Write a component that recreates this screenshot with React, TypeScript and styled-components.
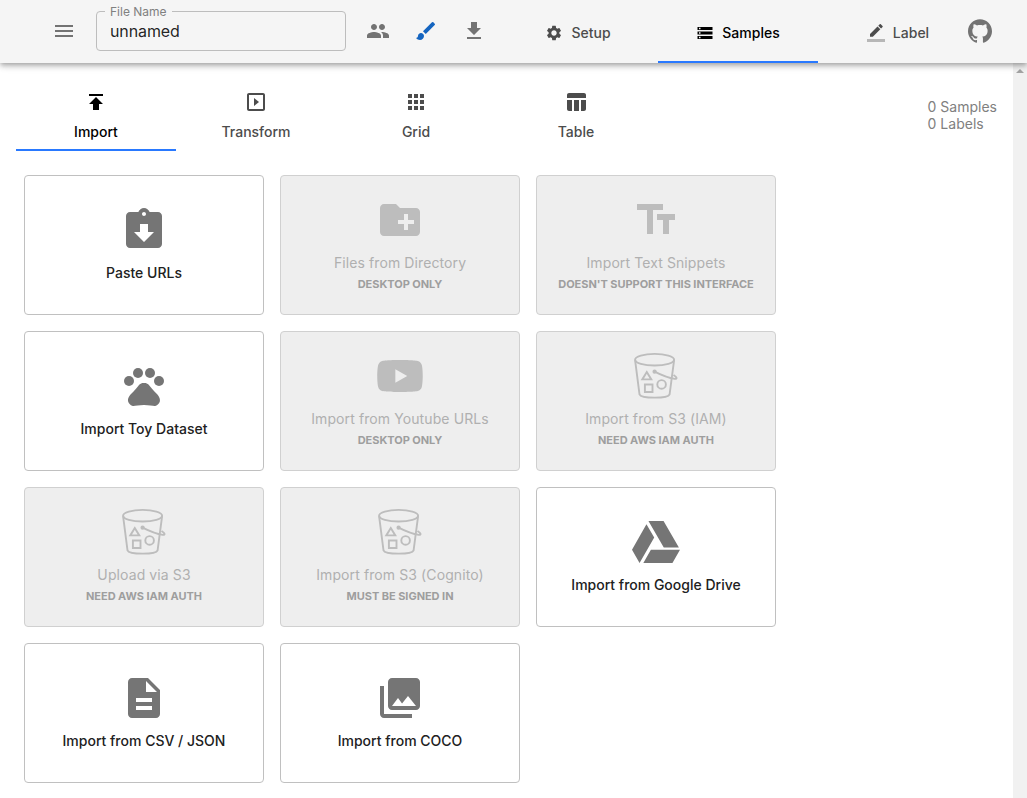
import React from "react";
import styled, { createGlobalStyle } from "styled-components";
import {
  MdMenu, MdPeople, MdBrush, MdSettings, MdStorage, MdPublish,
  MdSlideshow, MdApps, MdTableChart, MdAssignmentReturned, MdCreateNewFolder,
  MdTextFields, MdPets, MdDescription, MdCollections,
} from "react-icons/md";
import { FaYoutube, FaGoogleDrive } from "react-icons/fa";
import { SiGithub } from "react-icons/si";

const GlobalStyle = createGlobalStyle`
  * { box-sizing: border-box; }
  html, body { margin: 0; padding: 0; background: #fff; overflow: hidden; }
  body { font-family: Inter, sans-serif; font-size: 14px; }
  svg { display: block; flex-shrink: 0; }
`;

const Page = styled.div`
  height: 798px;
  display: flex;
  flex-direction: column;
`;

const Header = styled.header`
  height: 63px;
  flex-shrink: 0;
  display: flex;
  background: #f5f5f5;
  padding-left: 40px;
  position: relative;
  z-index: 1;
  box-shadow: 0 2px 4px -1px rgba(0, 0, 0, 0.2), 0 4px 5px 0 rgba(0, 0, 0, 0.14),
    0 1px 10px 0 rgba(0, 0, 0, 0.12);
`;

const IconButton = styled.button<{ $color?: string }>`
  width: 48px;
  height: 62px;
  padding: 0;
  border: 0;
  background: none;
  display: flex;
  align-items: center;
  justify-content: center;
  font-size: 24px;
  color: ${(p) => p.$color ?? "#737373"};
`;

const FileField = styled.div`
  position: relative;
  width: 250px;
  height: 40px;
  margin: 11px 8px 0;
  border: 1px solid #bdbdbd;
  border-radius: 4px;
  padding: 0 13px;
  font-size: 16px;
  line-height: 39px;
  letter-spacing: -0.1px;
  color: rgba(0, 0, 0, 0.87);
`;

const FieldLabel = styled.span`
  position: absolute;
  left: 8px;
  top: -7px;
  padding: 0 5px;
  background: #f5f5f5;
  font-size: 12px;
  line-height: 14px;
  letter-spacing: 0;
  color: #808080;
`;

const HeaderTabs = styled.nav`
  display: flex;
  margin-right: -10px;
`;

const HeaderTab = styled.div<{ $active?: boolean }>`
  width: 160px;
  height: 63px;
  display: flex;
  align-items: center;
  justify-content: center;
  gap: 8px;
  padding-top: 4px;
  font-weight: 500;
  color: ${(p) => (p.$active ? "#000" : "#4c4c4c")};
  border-bottom: 2px solid ${(p) => (p.$active ? "#2979ff" : "transparent")};
  svg { font-size: 18px; }
`;

const GithubLink = styled.a`
  display: flex;
  align-items: center;
  height: 62px;
  font-size: 24px;
  color: #737373;
`;

const Body = styled.div`
  flex: 1;
  min-height: 0;
  display: flex;
`;

const Content = styled.main`
  flex: 1;
  padding: 0 16px;
`;

const Scrollbar = styled.div`
  width: 14px;
  background: #f1f1f1;
  display: flex;
  justify-content: center;
  padding-top: 6px;
`;

const SubHeader = styled.div`
  display: flex;
  justify-content: space-between;
  padding-top: 16px;
`;

const Tabs = styled.div`
  display: flex;
`;

const Tab = styled.div<{ $active?: boolean }>`
  width: 160px;
  height: 72px;
  display: flex;
  flex-direction: column;
  align-items: center;
  padding-top: 11px;
  font-weight: 500;
  line-height: 24px;
  color: ${(p) => (p.$active ? "#000" : "#4c4c4c")};
  border-bottom: 2px solid ${(p) => (p.$active ? "#2979ff" : "transparent")};
  svg { font-size: 24px; margin-bottom: 6px; }
`;

const Counts = styled.div`
  padding-top: 19px;
  line-height: 17px;
  color: #808080;
`;

const CardGrid = styled.div`
  display: grid;
  grid-template-columns: repeat(3, 240px);
  grid-auto-rows: 140px;
  gap: 16px;
  padding: 24px 8px 0;
`;

const Card = styled.div<{ $disabled: boolean }>`
  display: flex;
  flex-direction: column;
  align-items: center;
  justify-content: center;
  border: 1px solid ${(p) => (p.$disabled ? "#d0d0d0" : "#c0c0c0")};
  border-radius: 4px;
  background: ${(p) => (p.$disabled ? "#eeeeee" : "#fff")};
  color: ${(p) => (p.$disabled ? "#bdbdbd" : "#757575")};
  font-size: 48px;
`;

const CardTitle = styled.div<{ $disabled: boolean }>`
  margin-top: 8px;
  font-size: 14px;
  font-weight: ${(p) => (p.$disabled ? 400 : 500)};
  line-height: 22px;
  letter-spacing: ${(p) => (p.$disabled ? "0.1px" : "normal")};
  color: ${(p) => (p.$disabled ? "#b0b0b0" : "#212121")};
`;

const CardNote = styled.div`
  font-size: 11px;
  font-weight: 700;
  line-height: 20px;
  letter-spacing: -0.04px;
  text-transform: uppercase;
  color: #9e9e9e;
`;

const LabelIcon = () => (
  <svg width="18" height="18" viewBox="0 0 24 24" fill="currentColor">
    <path d="M17.75 7L14 3.25l-10 10V17h3.75l10-10zm2.96-2.96c.39-.39.39-1.02 0-1.41L18.37.29a.996.996 0 00-1.41 0L15 2.25 18.75 6l1.96-1.96z" />
    <path fillOpacity=".36" d="M0 20h24v4H0z" />
  </svg>
);

const DownloadIcon = () => (
  <svg width="24" height="24" viewBox="0 0 24 24" fill="currentColor">
    <path d="M19 9h-4V3H9v6H5l7 7 7-7zM5 18v2h14v-2H5z" />
  </svg>
);

const BucketIcon = () => (
  <svg width="48" height="48" viewBox="0 0 48 48" fill="none" stroke="currentColor" strokeWidth="1.9">
    <ellipse cx="22.6" cy="7.7" rx="19.5" ry="5.8" />
    <path d="M3.1 8.2L7.5 42.300c.8 2 6.700 3.300 15.100 3.300s14.200-1.300 15-3.300L42.100 8.200" />
    <path d="M14.800 20l-4.500 7.400h9z" />
    <path d="M12.900 32.500h7.600v7.500h-7.600z" />
    <circle cx="29.600" cy="32.400" r="4.300" />
    <path d="M22.600 19.700c6.500 3.300 13.500 6.300 20.200 7.200 2.800.2 2.200-1.600-1.300-3.900" />
    <circle cx="22.600" cy="19.700" r="1.200" fill="currentColor" />
  </svg>
);

const cards: { icon: React.ReactNode; title: string; note?: string }[] = [
  { icon: <MdAssignmentReturned />, title: "Paste URLs" },
  { icon: <MdCreateNewFolder />, title: "Files from Directory", note: "Desktop Only" },
  { icon: <MdTextFields />, title: "Import Text Snippets", note: "Doesn't support this interface" },
  { icon: <MdPets />, title: "Import Toy Dataset" },
  { icon: <FaYoutube />, title: "Import from Youtube URLs", note: "Desktop Only" },
  { icon: <BucketIcon />, title: "Import from S3 (IAM)", note: "Need AWS IAM Auth" },
  { icon: <BucketIcon />, title: "Upload via S3", note: "Need AWS IAM Auth" },
  { icon: <BucketIcon />, title: "Import from S3 (Cognito)", note: "Must be signed in" },
  { icon: <FaGoogleDrive />, title: "Import from Google Drive" },
  { icon: <MdDescription />, title: "Import from CSV / JSON" },
  { icon: <MdCollections />, title: "Import from COCO" },
];

export default function App() {
  return (
    <>
      <GlobalStyle />
      <Page>
        <Header>
          <IconButton><MdMenu /></IconButton>
          <FileField>
            <FieldLabel>File Name</FieldLabel>
            unnamed
          </FileField>
          <IconButton><MdPeople /></IconButton>
          <IconButton $color="#1565c0"><MdBrush /></IconButton>
          <IconButton><DownloadIcon /></IconButton>
          <HeaderTabs>
            <HeaderTab><MdSettings />Setup</HeaderTab>
            <HeaderTab $active><MdStorage />Samples</HeaderTab>
            <HeaderTab><LabelIcon />Label</HeaderTab>
          </HeaderTabs>
          <GithubLink><SiGithub /></GithubLink>
        </Header>
        <Body>
          <Content>
            <SubHeader>
              <Tabs>
                <Tab $active><MdPublish />Import</Tab>
                <Tab><MdSlideshow />Transform</Tab>
                <Tab><MdApps />Grid</Tab>
                <Tab><MdTableChart />Table</Tab>
              </Tabs>
              <Counts>
                <div>0 Samples</div>
                <div>0 Labels</div>
              </Counts>
            </SubHeader>
            <CardGrid>
              {cards.map(({ icon, title, note }) => (
                <Card key={title} $disabled={!!note}>
                  {icon}
                  <CardTitle $disabled={!!note}>{title}</CardTitle>
                  {note && <CardNote>{note}</CardNote>}
                </Card>
              ))}
            </CardGrid>
          </Content>
          <Scrollbar>
            <svg width="8" height="4" viewBox="0 0 8 4" fill="#a3a3a3"><path d="M4 0l4 4H0z" /></svg>
          </Scrollbar>
        </Body>
      </Page>
    </>
  );
}
